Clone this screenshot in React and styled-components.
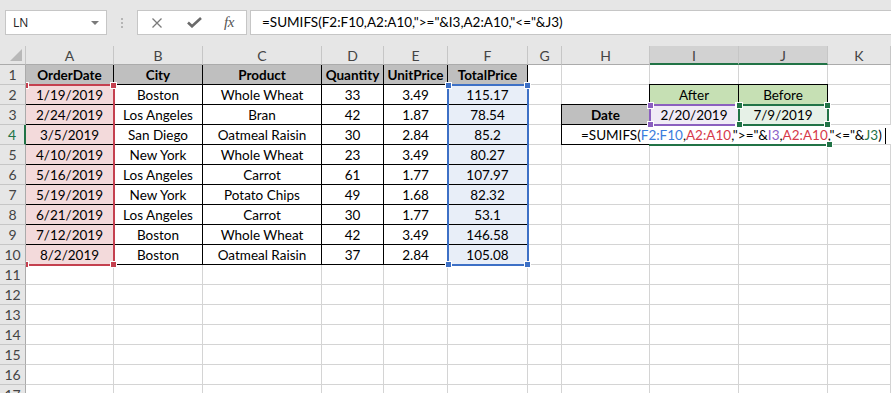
import React from "react";
import styled, { createGlobalStyle, css } from "styled-components";

const GlobalStyle = createGlobalStyle`
  html, body {
    margin: 0;
    padding: 0;
    background: #fff;
    overflow: hidden;
  }
  body {
    font-family: Lato, "Liberation Sans", sans-serif;
  }
`;

const cellFont = `
  font-family: Lato, "Liberation Sans", sans-serif;
  font-size: 13.5px;
`;

const Window = styled.div`
  width: 891px;
  height: 393px;
  overflow: hidden;
  display: flex;
  flex-direction: column;
  background: #fff;
`;

/* ---------- formula bar ---------- */

const Toolbar = styled.div`
  height: 46px;
  flex: none;
  box-sizing: border-box;
  background: #e6e6e6;
  display: flex;
  align-items: flex-start;
  padding: 10px 0 0 5px;
`;

const NameBox = styled.div`
  width: 102px;
  height: 25px;
  box-sizing: border-box;
  background: #fff;
  border: 1px solid #c6c6c6;
  display: flex;
  align-items: center;
  justify-content: space-between;
  padding: 0 7px 0 7px;
  font-family: "Open Sans", "Liberation Sans", sans-serif;
  font-size: 12px;
  color: #222;
`;

const DropArrow = styled.span`
  width: 0;
  height: 0;
  border-left: 4px solid transparent;
  border-right: 4px solid transparent;
  border-top: 4px solid #7a7a7a;
`;

const Grip = styled.div`
  width: 30px;
  height: 25px;
  display: flex;
  flex-direction: column;
  align-items: center;
  justify-content: center;
  gap: 2px;
  & > span {
    width: 2px;
    height: 2px;
    background: #b5b5b5;
  }
`;

const ButtonBox = styled.div`
  width: 110px;
  height: 25px;
  box-sizing: border-box;
  background: #fff;
  border: 1px solid #c6c6c6;
  display: flex;
  align-items: center;
  padding-left: 13px;
`;

const IconSlot = styled.span`
  width: 36px;
  display: flex;
  align-items: center;
`;

const Fx = styled.span`
  font-family: "Liberation Serif", serif;
  font-style: italic;
  font-size: 15px;
  color: #555;
  letter-spacing: -0.5px;
  margin-left: 1px;
`;

const FormulaInput = styled.div`
  flex: 1;
  height: 25px;
  margin-left: 3px;
  box-sizing: border-box;
  background: #fff;
  border: 1px solid #c6c6c6;
  border-right: none;
  padding-left: 11px;
  ${cellFont}
  line-height: 23px;
  color: #000;
  white-space: nowrap;
`;

/* ---------- sheet ---------- */

const Sheet = styled.div`
  display: grid;
  grid-template-columns: 26px 88px 89px 119px 62px 64px 80px 34px 88px 89px 89px 1fr;
  grid-template-rows: 19px repeat(17, 20px);
`;

const placed = css`
  grid-column: ${(p) => p.$c};
  grid-row: ${(p) => p.$r};
`;

const Corner = styled.div`
  grid-column: 1;
  grid-row: 1;
  position: relative;
  z-index: 3;
  background: #e6e6e6;
  box-sizing: border-box;
  border-right: 1px solid #c6c6c6;
  border-bottom: 1px solid #ababab;
  &::after {
    content: "";
    position: absolute;
    right: 3px;
    bottom: 3px;
    width: 0;
    height: 0;
    border-left: 12px solid transparent;
    border-bottom: 12px solid #b8b8b8;
  }
`;

const ColHead = styled.div`
  ${placed}
  position: relative;
  z-index: 3;
  box-sizing: border-box;
  background: ${(p) => (p.$active ? "#d2d2d2" : "#e6e6e6")};
  border-right: 1px solid #c6c6c6;
  border-bottom: ${(p) => (p.$active ? "2px solid #217346" : "1px solid #ababab")};
  ${cellFont}
  font-size: 14px;
  line-height: 19px;
  text-align: center;
  color: #444;
`;

const RowHead = styled.div`
  ${placed}
  position: relative;
  z-index: 3;
  box-sizing: border-box;
  background: #e6e6e6;
  border-right: ${(p) => (p.$active ? "2px solid #217346" : "1px solid #ababab")};
  border-bottom: 1px solid #c6c6c6;
  ${cellFont}
  font-size: 14px;
  line-height: 20px;
  text-align: center;
  color: ${(p) => (p.$active ? "#217346" : "#444")};
`;

const Cell = styled.div`
  ${placed}
  position: relative;
  box-sizing: border-box;
  border-right: 1px solid #d4d4d4;
  border-bottom: 1px solid #d4d4d4;
  background: ${(p) => p.$fill || "#fff"};
  ${cellFont}
  font-weight: ${(p) => (p.$bold ? 700 : 400)};
  text-align: center;
  line-height: 20px;
  color: #000;
  white-space: nowrap;
  ${(p) =>
    p.$boxed &&
    css`
      &::after {
        content: "";
        position: absolute;
        top: -1px;
        left: -1px;
        right: -1px;
        bottom: -1px;
        border: 1px solid #000;
        pointer-events: none;
      }
    `}
`;

const EditCell = styled.div`
  grid-column: 9 / 13;
  grid-row: 5;
  position: relative;
  z-index: 1;
  box-sizing: border-box;
  background: #fff;
  border-bottom: 1px solid #d4d4d4;
  padding-left: 19px;
  ${cellFont}
  line-height: 20px;
  color: #000;
  white-space: nowrap;
  &::before {
    content: "";
    position: absolute;
    top: -1px;
    left: -1px;
    width: 89px;
    bottom: -1px;
    border-left: 1px solid #000;
    border-bottom: 1px solid #000;
  }
`;

const Ref = styled.span`
  color: ${(p) => p.$color};
`;

const Caret = styled.span`
  display: inline-block;
  width: 1px;
  height: 16px;
  background: #000;
  margin-left: 3px;
  vertical-align: -4px;
`;

const RangeBox = styled.div`
  ${placed}
  position: relative;
  z-index: 2;
  pointer-events: none;
  margin: -1px;
  margin-left: ${(p) => (p.$edge ? "-2px" : "-1px")};
  box-sizing: border-box;
  ${(p) =>
    p.$underline
      ? css`
          border-bottom: 2px solid ${p.$color};
        `
      : css`
          border: 2px solid ${p.$color};
        `}
`;

const Handle = styled.span`
  position: absolute;
  width: 5px;
  height: 5px;
  background: ${(p) => p.$color};
  box-shadow: 0 0 0 1px #fff;
  ${(p) => (p.$top ? "top: -3px;" : "bottom: -3px;")}
  ${(p) => (p.$left ? "left: -3px;" : "right: -3px;")}
`;

/* ---------- data ---------- */

const COLS = ["A", "B", "C", "D", "E", "F", "G", "H", "I", "J", "K"];

const RED = "#c4404f";
const BLUE = "#3d70c6";
const PURPLE = "#8b5fbf";
const GREEN = "#217346";

const GRAY_FILL = "#bfbfbf";
const PINK_FILL = "#f3dadb";
const BLUE_FILL = "#e8eef8";
const LEAF_FILL = "#c6e0b4";

const orders = [
  ["1/19/2019", "Boston", "Whole Wheat", "33", "3.49", "115.17"],
  ["2/24/2019", "Los Angeles", "Bran", "42", "1.87", "78.54"],
  ["3/5/2019", "San Diego", "Oatmeal Raisin", "30", "2.84", "85.2"],
  ["4/10/2019", "New York", "Whole Wheat", "23", "3.49", "80.27"],
  ["5/16/2019", "Los Angeles", "Carrot", "61", "1.77", "107.97"],
  ["5/19/2019", "New York", "Potato Chips", "49", "1.68", "82.32"],
  ["6/21/2019", "Los Angeles", "Carrot", "30", "1.77", "53.1"],
  ["7/12/2019", "Boston", "Whole Wheat", "42", "3.49", "146.58"],
  ["8/2/2019", "Boston", "Oatmeal Raisin", "37", "2.84", "105.08"],
];

const headers = ["OrderDate", "City", "Product", "Quantity", "UnitPrice", "TotalPrice"];

function buildCells() {
  const cells = {};
  headers.forEach((h, i) => {
    cells[COLS[i] + 1] = { text: h, bold: true, fill: GRAY_FILL, boxed: true };
  });
  orders.forEach((row, r) => {
    row.forEach((v, i) => {
      cells[COLS[i] + (r + 2)] = {
        text: v,
        boxed: true,
        fill: i === 0 ? PINK_FILL : i === 5 ? BLUE_FILL : undefined,
      };
    });
  });
  cells.I2 = { text: "After", fill: LEAF_FILL, boxed: true };
  cells.J2 = { text: "Before", fill: LEAF_FILL, boxed: true };
  cells.H3 = { text: "Date", bold: true, fill: GRAY_FILL, boxed: true };
  cells.I3 = { text: "2/20/2019", fill: "#f0ebf6" };
  cells.J3 = { text: "7/9/2019", fill: "#e6f1e7" };
  return cells;
}

const cells = buildCells();
const ROWS = Array.from({ length: 17 }, (_, i) => i + 1);
const ALL = ["tl", "tr", "bl", "br"];

const Range = ({ cols, rows, color, corners, underline, edge }) => (
  <RangeBox $c={cols} $r={rows} $color={color} $underline={underline} $edge={edge}>
    {corners.map((k) => (
      <Handle key={k} $color={color} $top={k[0] === "t"} $left={k[1] === "l"} />
    ))}
  </RangeBox>
);

export default function App() {
  return (
    <Window>
      <GlobalStyle />
      <Toolbar>
        <NameBox>
          <span>LN</span>
          <DropArrow />
        </NameBox>
        <Grip>
          <span />
          <span />
          <span />
        </Grip>
        <ButtonBox>
          <IconSlot>
            <svg width="12" height="12" viewBox="0 0 12 12">
              <path d="M1.5 1.5 L10.5 10.5 M10.5 1.5 L1.5 10.5" stroke="#7a7a7a" strokeWidth="1.3" fill="none" />
            </svg>
          </IconSlot>
          <IconSlot>
            <svg width="15" height="11" viewBox="0 0 15 11">
              <path d="M1 5.5 L5 9.3 L14 1" stroke="#6a6a6a" strokeWidth="2.6" fill="none" />
            </svg>
          </IconSlot>
          <Fx>fx</Fx>
        </ButtonBox>
        <FormulaInput>=SUMIFS(F2:F10,A2:A10,"&gt;="&amp;I3,A2:A10,"&lt;="&amp;J3)</FormulaInput>
      </Toolbar>

      <Sheet>
        <Corner />
        {COLS.map((c, ci) => (
          <ColHead key={c} $c={ci + 2} $r={1} $active={c === "I" || c === "J"}>
            {c}
          </ColHead>
        ))}
        {ROWS.map((r) => (
          <React.Fragment key={r}>
            <RowHead $c={1} $r={r + 1} $active={r === 4}>
              {r}
            </RowHead>
            {COLS.map((c, ci) => {
              if (r === 4 && ci >= 7) return null;
              const d = cells[c + r] || {};
              return (
                <Cell key={c} $c={ci + 2} $r={r + 1} $fill={d.fill} $bold={d.bold} $boxed={d.boxed}>
                  {d.text}
                </Cell>
              );
            })}
            {r === 4 && (
              <EditCell>
                =SUMIFS(<Ref $color="#3b7ddd">F2:F10</Ref>,<Ref $color="#d63a4a">A2:A10</Ref>,"&gt;="&amp;
                <Ref $color="#8c5ec8">I3</Ref>,<Ref $color="#d63a4a">A2:A10</Ref>,"&lt;="&amp;
                <Ref $color={GREEN}>J3</Ref>)<Caret />
              </EditCell>
            )}
          </React.Fragment>
        ))}

        <Range cols="2 / 3" rows="3 / 12" color={RED} corners={ALL} edge />
        <Range cols="7 / 8" rows="3 / 12" color={BLUE} corners={ALL} />
        <Range cols="10 / 11" rows="4 / 5" color={PURPLE} corners={ALL} />
        <Range cols="11 / 12" rows="4 / 5" color={GREEN} corners={ALL} />
        <Range cols="10 / 12" rows="5 / 6" color={GREEN} corners={["br"]} underline />
      </Sheet>
    </Window>
  );
}
